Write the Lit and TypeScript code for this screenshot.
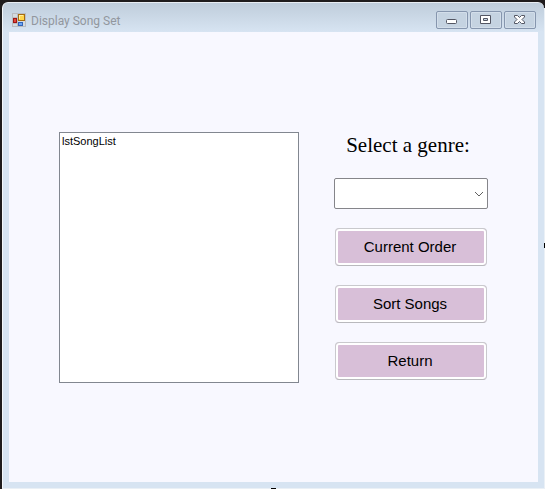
import { LitElement, html, css, svg } from "lit";
import { customElement, state } from "lit/decorators.js";

@customElement("app-root")
export class AppRoot extends LitElement {
  @state() private songs = ["lstSongList"];

  static styles = css`
    :host {
      display: block;
      box-sizing: border-box;
      min-height: 100vh;
      padding: 2px 1px 1px 2px;
      background: linear-gradient(to right, #1f1c1d 2px, #eaf0f6 2px);
      position: relative;
    }
    *, *::before, *::after { box-sizing: border-box; }
    .window {
      display: flex;
      flex-direction: column;
      min-height: calc(100vh - 3px);
      padding: 0 6px 6px;
      border-left: 1px solid #f4f7fa;
      border-top: 1px solid #e8edf3;
      border-radius: 6px 6px 0 0;
      background: linear-gradient(#bfcddb, #d7e4f2 29px);
    }
    .shell {
      background: linear-gradient(#1f1c1d, #1f1c1d) 0 0 / 100% 8px no-repeat;
      margin: -2px -1px 0 0;
      padding: 2px 1px 0 0;
    }
    .titlebar {
      display: flex;
      align-items: center;
      height: 29px;
      padding: 5px 2px 0 3px;
      gap: 5px;
    }
    .titlebar h1 {
      flex: 1;
      margin: 0;
      padding-top: 1px;
      font: 12px/16px Roboto, sans-serif;
      color: #92979e;
      white-space: nowrap;
    }
    .app-icon { width: 14px; height: 14px; flex: none; }
    .caption { display: flex; gap: 2px; }
    .caption button {
      display: grid;
      place-items: center;
      width: 32px;
      height: 18px;
      padding: 0;
      border: 1px solid #8696ae;
      border-radius: 2px;
      background: #c5d3e1;
      box-shadow: inset 0 0 0 1px #d3deea;
    }
    .caption svg { width: 14px; height: 12px; display: block; }
    .client {
      flex: 1;
      display: grid;
      grid-template-columns: 240fr 154fr;
      gap: 35px;
      align-items: start;
      padding: 100px 50px 50px;
      background: #f8f8ff;
    }
    .songs {
      width: 100%;
      height: 251px;
      margin: 0;
      padding: 0;
      border: 1px solid #828790;
      border-radius: 0;
      background: #fff;
      outline: none;
      overflow: hidden;
      font: 11px/16px "Liberation Sans", sans-serif;
      color: #000;
    }
    .songs option { padding: 2px 2px 0; min-height: 16px; }
    .controls { display: flex; flex-direction: column; }
    .controls label {
      height: 46px;
      font: 21px/26px "Liberation Serif", serif;
      color: #000;
      text-align: center;
      padding-right: 6px;
      white-space: nowrap;
    }
    .combo { position: relative; display: flex; }
    .combo select {
      appearance: none;
      width: 100%;
      height: 31px;
      margin: 0;
      border: 1px solid #85858a;
      border-radius: 2px;
      background: #fff;
      font: 15px "Liberation Sans", sans-serif;
    }
    .combo svg {
      position: absolute;
      right: 4px;
      top: 12px;
      width: 10px;
      height: 8px;
      pointer-events: none;
    }
    .actions {
      display: grid;
      gap: 19px;
      padding: 19px 1px 0;
    }
    .actions button {
      height: 38px;
      padding: 0 2px 0 0;
      border: 1px solid #c9c9cd;
      border-bottom-color: #b9b9bd;
      border-radius: 4px;
      background: #d8bfd8;
      box-shadow: inset 0 0 0 2px #fff;
      font: 15px/20px "Liberation Sans", sans-serif;
      color: #000;
    }
    .grip { position: absolute; background: #000; }
    .grip.bottom { left: 50%; bottom: 0; width: 5px; height: 1px; margin-left: -2px; }
    .grip.right { right: 0; top: 50%; width: 1px; height: 5px; margin-top: -2px; }
  `;

  private appIcon = svg`
    <rect x="0.5" y="0.5" width="13" height="13" fill="#d4dae0" stroke="#b9bcc0"/>
    <path d="M5.5 1V13M1 4.5H6M1 10.5H6" stroke="#b9bcc0"/>
    <rect x="1.5" y="5.5" width="3" height="4" fill="#e0453a" stroke="#a01512"/>
    <rect x="6.5" y="1.5" width="6" height="6" fill="#ffd54a" stroke="#a66b10"/>
    <path d="M7 2.5H11M7.5 2V6" stroke="#fff0a0"/>
    <rect x="6.5" y="9.5" width="4" height="3" fill="#6da5f5" stroke="#3465b8"/>`;

  private glyphs = [
    { name: "Minimize", shape: svg`<rect x="1.5" y="5.5" width="10" height="4" rx="1" fill="#fff" stroke="#535663"/>` },
    { name: "Maximize", shape: svg`<path d="M1.5 1.5H11.5V9.5H1.5ZM4.5 4.5V6.5H8.5V4.5Z" fill="#fff" fill-rule="evenodd" stroke="#535663"/>` },
    { name: "Close", shape: svg`<path d="M1.5 1.5H4.5L6.5 3.5L8.5 1.5H11.5V3L9 5.5L11.5 8V9.5H8.5L6.5 7.5L4.5 9.5H1.5V8L4 5.5L1.5 3Z" fill="#fff" stroke="#535663"/>` },
  ];

  render() {
    return html`
      <div class="shell">
        <div class="window">
          <header class="titlebar">
            <svg class="app-icon" viewBox="0 0 14 14" aria-hidden="true">${this.appIcon}</svg>
            <h1>Display Song Set</h1>
            <div class="caption">
              ${this.glyphs.map(
                (g) => html`<button type="button" aria-label=${g.name}>
                  <svg viewBox="0 0 14 12" aria-hidden="true">${g.shape}</svg>
                </button>`
              )}
            </div>
          </header>
          <main class="client">
            <select class="songs" size="15" aria-label="Songs">
              ${this.songs.map((s) => html`<option>${s}</option>`)}
            </select>
            <div class="controls">
              <label for="genre">Select a genre:</label>
              <div class="combo">
                <select id="genre"><option value=""></option></select>
                <svg viewBox="0 0 10 8" aria-hidden="true">
                  <path d="M1 2L5 6L9 2" fill="none" stroke="#606060"/>
                </svg>
              </div>
              <div class="actions">
                ${["Current Order", "Sort Songs", "Return"].map(
                  (t) => html`<button type="button">${t}</button>`
                )}
              </div>
            </div>
          </main>
        </div>
      </div>
      <span class="grip bottom"></span>
      <span class="grip right"></span>
    `;
  }
}
